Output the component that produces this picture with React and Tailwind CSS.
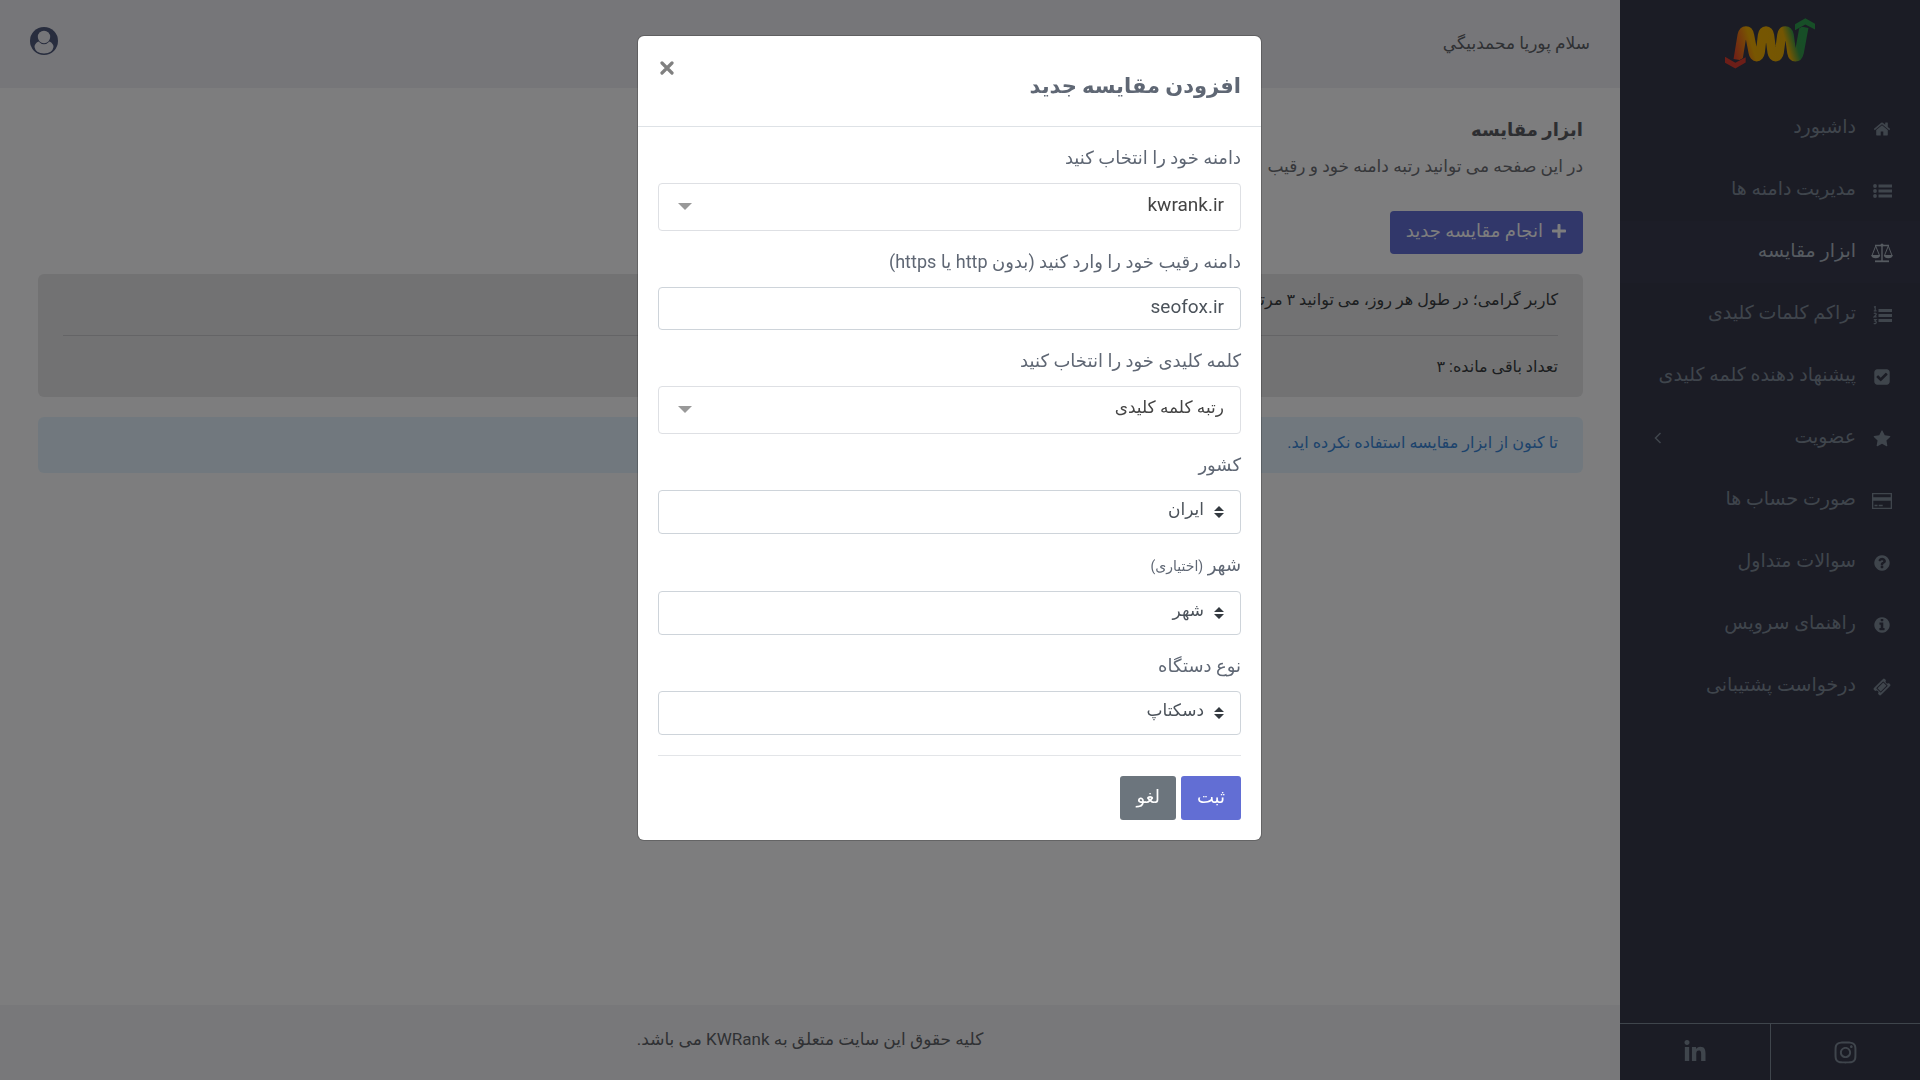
import { useId } from 'react';
import clsx from 'clsx';
import { FaInstagram, FaLinkedinIn, FaPlus } from 'react-icons/fa';

function Glyph({ d }) {
    return (
        <svg viewBox="0 0 1792 1792" fill="currentColor" className="h-[18px] w-[18px]" aria-hidden="true">
            <path d={d} />
        </svg>
    );
}

function ScaleIcon() {
    return (
        <svg viewBox="0 0 22 20" fill="none" stroke="currentColor" className="h-5 w-[22px]" aria-hidden="true">
            <path d="M4 2.500h14M11 2v16" strokeWidth="1.400" />
            <path d="M4 18.300h14" strokeWidth="1.800" />
            <circle cx="11" cy="2" r="1.500" fill="currentColor" stroke="none" />
            <path d="M4.700 3 1 12.500M4.700 3l3.800 9.500M17.300 3l-3.800 9.500M17.300 3 21 12.500" strokeWidth="1" />
            <path d="M.2 12h9q-.5 3.200-4.500 3.200T.2 12zM12.800 12h9q-.5 3.200-4.500 3.200T12.800 12z" fill="currentColor" stroke="none" />
        </svg>
    );
}

function CardIcon() {
    return (
        <svg viewBox="0 0 20 16" fill="currentColor" className="h-4 w-5" aria-hidden="true">
            <path d="M0 0h20v16H0zM1.300 1.300v3h17.400v-3zM1.300 7.700v7h17.400v-7z" fillRule="evenodd" />
            <path d="M2.500 11.800h3v1.400h-3zM6.700 11.800h4v1.400h-4z" />
        </svg>
    );
}

function BulletsIcon() {
    return (
        <svg viewBox="0 0 19 16" fill="currentColor" className="h-4 w-[19px]" aria-hidden="true">
            <circle cx="2" cy="3" r="1.900" />
            <circle cx="2" cy="8" r="1.900" />
            <circle cx="2" cy="13" r="1.900" />
            <path d="M5.500 1.500H19v3H5.500zM5.500 6.500H19v3H5.500zM5.500 11.500H19v3H5.500z" />
        </svg>
    );
}

function NumbersIcon() {
    return (
        <svg viewBox="0 0 19 19" fill="currentColor" className="h-[19px] w-[19px]" aria-hidden="true">
            <path d="M5.500 3H19v3H5.500zM5.500 8H19v3H5.500zM5.500 13H19v3H5.500z" />
            <path
                d="M1 1.200 2.200.5v4.300M.8 4.800h2.800M.8 7.600q1.300-1 2.200 0t-2 3.300h2.600M.8 13.500h2.400L1.800 15q1.800.2 1.400 1.700t-2.500.8"
                fill="none"
                stroke="currentColor"
                strokeWidth="1.200"
            />
        </svg>
    );
}

const paths = {
    home: 'M1472 992v480q0 26-19 45t-45 19h-384v-384h-256v384h-384q-26 0-45-19t-19-45v-480q0-1 .5-3t.5-3l575-474 575 474q1 2 1 6zm223-69l-62 74q-8 9-21 11h-3q-13 0-21-7l-692-577-692 577q-12 8-24 7-13-2-21-11l-62-74q-8-10-7-23.500t11-21.500l719-599q32-26 76-26t76 26l244 204v-195q0-14 9-23t23-9h192q14 0 23 9t9 23v408l219 182q10 8 11 21.500t-7 23.500z',
    check: 'M813 1299l614-614q19-19 19-45t-19-45l-102-102q-19-19-45-19t-45 19l-467 467-211-211q-19-19-45-19t-45 19l-102 102q-19 19-19 45t19 45l358 358q19 19 45 19t45-19zm851-883v960q0 119-84.500 203.500t-203.500 84.500h-960q-119 0-203.500-84.500t-84.500-203.500v-960q0-119 84.500-203.500t203.500-84.500h960q119 0 203.500 84.500t84.500 203.500z',
    star: 'M1728 647q0 22-26 48l-363 354 86 500q1 7 1 20 0 21-10.500 35.500t-30.500 14.500q-19 0-40-12l-449-236-449 236q-22 12-40 12-21 0-31.500-14.500t-10.500-35.500q0-6 2-20l86-500-364-354q-25-27-25-48 0-37 56-46l502-73 225-455q19-41 49-41t49 41l225 455 502 73q56 9 56 46z',
    question: 'M1024 1376v-192q0-14-9-23t-23-9h-192q-14 0-23 9t-9 23v192q0 14 9 23t23 9h192q14 0 23-9t9-23zm256-672q0-88-55.500-163t-138.500-116-170-41q-243 0-371 213-15 24 8 42l132 100q7 6 19 6 16 0 25-12 53-68 86-92 34-24 86-24 48 0 85.500 26t37.500 59q0 38-20 61t-68 45q-63 28-115.500 86.500t-52.500 125.500v36q0 14 9 23t23 9h192q14 0 23-9t9-23q0-19 21.500-49.500t54.500-49.500q32-18 49-28.500t46-35 44.500-48 28-60.500 12.500-81zm384 192q0 209-103 385.500t-279.500 279.500-385.500 103-385.500-103-279.500-279.500-103-385.500 103-385.500 279.500-279.500 385.500-103 385.500 103 279.500 279.500 103 385.500z',
    info: 'M1152 1376v-160q0-14-9-23t-23-9h-96v-512q0-14-9-23t-23-9h-320q-14 0-23 9t-9 23v160q0 14 9 23t23 9h96v320h-96q-14 0-23 9t-9 23v160q0 14 9 23t23 9h448q14 0 23-9t9-23zm-128-896v-160q0-14-9-23t-23-9h-192q-14 0-23 9t-9 23v160q0 14 9 23t23 9h192q14 0 23-9t9-23zm640 416q0 209-103 385.500t-279.500 279.500-385.500 103-385.500-103-279.500-279.500-103-385.500 103-385.500 279.500-279.500 385.500-103 385.500 103 279.500 279.500 103 385.500z',
    ticket: 'M1024 452l316 316-572 572-316-316zm-211 979l618-618q19-19 19-45t-19-45l-362-362q-18-18-45-18t-45 18l-618 618q-19 19-19 45t19 45l362 362q18 18 45 18t45-18zm889-637l-907 908q-37 37-90.500 37t-90.500-37l-126-126q56-56 56-136t-56-136-136-56-136 56l-125-126q-37-37-37-90.500t37-90.500l907-906q37-37 90.500-37t90.500 37l125 125q-56 56-56 136t56 136 136 56 136-56l126 125q37 37 37 90.500t-37 90.500z',
};

const menu = [
    { label: 'داشبورد', icon: <Glyph d={paths.home} /> },
    { label: 'مدیریت دامنه ها', icon: <BulletsIcon /> },
    { label: 'ابزار مقایسه', icon: <ScaleIcon />, active: true },
    { label: 'تراکم کلمات کلیدی', icon: <NumbersIcon /> },
    { label: 'پیشنهاد دهنده کلمه کلیدی', icon: <Glyph d={paths.check} /> },
    { label: 'عضویت', icon: <Glyph d={paths.star} />, children: true },
    { label: 'صورت حساب ها', icon: <CardIcon /> },
    { label: 'سوالات متداول', icon: <Glyph d={paths.question} /> },
    { label: 'راهنمای سرویس', icon: <Glyph d={paths.info} /> },
    { label: 'درخواست پشتیبانی', icon: <Glyph d={paths.ticket} /> },
];

function Logo() {
    return (
        <svg viewBox="315 53 270 152" className="h-[51px] w-[90px]" role="img" aria-label="KWRank">
            <defs>
                <linearGradient id="logo-wave" gradientUnits="userSpaceOnUse" x1="345" y1="170" x2="545" y2="110">
                    <stop offset="0" stopColor="#e0442c" />
                    <stop offset=".18" stopColor="#ec8014" />
                    <stop offset=".28" stopColor="#f0ac04" />
                    <stop offset=".76" stopColor="#e8ac06" />
                    <stop offset=".9" stopColor="#36984a" />
                    <stop offset="1" stopColor="#2f9c4f" />
                </linearGradient>
            </defs>
            <path
                d="M354 178 366 104C370 86 386 86 389 104L399 156C402 174 418 174 421 156L427 104C430 86 446 86 449 104L456 156C459 174 475 174 478 156L485 104C488 86 504 86 508 104L515 156C518 174 534 174 538 156L552 80"
                fill="none"
                stroke="url(#logo-wave)"
                strokeWidth="27"
            />
            <path d="M525 71 556 53 585 70V87L556 72 525 89z" fill="#2f9c4f" stroke="#36384a" strokeWidth="3" paintOrder="stroke" />
            <path d="M315 169 346 187 377 170V186L346 204 315 187z" fill="#d83c30" stroke="#36384a" strokeWidth="3" paintOrder="stroke" />
        </svg>
    );
}

function Sidebar() {
    return (
        <aside className="flex w-[300px] shrink-0 flex-col bg-[#36384a] text-[#7f8a99]">
            <div className="flex h-[97px] justify-center pt-[18px]">
                <Logo />
            </div>
            <nav>
                {menu.map((item) => (
                    <a
                        key={item.label}
                        href="#"
                        className={clsx('flex h-[62px] items-center px-[26px] text-[19px]', item.active && 'bg-[#393b4e] text-[#aab4c0]')}
                    >
                        <span className="flex w-6 justify-center pt-[2px]">{item.icon}</span>
                        <span className="mr-[14px] flex-1 whitespace-nowrap pb-[2px]">{item.label}</span>
                        {item.children && (
                            <svg viewBox="0 0 8 12" className="ml-2 h-3 w-2" fill="none" stroke="currentColor" strokeWidth="1.500" aria-hidden="true">
                                <path d="M6.500 1 1.500 6l5 5" />
                            </svg>
                        )}
                    </a>
                ))}
            </nav>
            <div className="mt-auto grid grid-cols-2 border-t border-[#7f8a99]">
                <a href="#" aria-label="Instagram" className="flex h-14 items-center justify-center border-l border-[#7f8a99]">
                    <FaInstagram size={25} />
                </a>
                <a href="#" aria-label="LinkedIn" className="flex h-14 items-center justify-center">
                    <FaLinkedinIn size={24} />
                </a>
            </div>
        </aside>
    );
}

function Header() {
    return (
        <header className="flex h-[88px] items-center justify-between bg-[#ededf3] px-[30px]">
            <span className="text-[17px] text-[#5f6369]">سلام پوریا محمدبیگي</span>
            <button type="button" aria-label="حساب کاربری" className="mb-[6px]">
                <svg viewBox="0 0 28 28" className="h-7 w-7">
                    <circle cx="14" cy="14" r="14" fill="#505a7c" />
                    <path d="M8.500 14.500Q11 17.200 14 17.200t5.500-2.700Q23.500 16.500 23.500 20q-1 6-9.500 6.500Q5.500 26 4.500 20q0-3.500 4-5.500z" fill="#ededf3" />
                    <circle cx="14" cy="10" r="6.200" fill="#ededf3" />
                </svg>
            </button>
        </header>
    );
}

function Field({ label, hint, children }) {
    const id = useId();
    return (
        <div className="mb-5">
            <label htmlFor={id} className="mb-[14px] block text-[18px] leading-[22px] text-[#5f6774]">
                {label} {hint && <small className="text-[14px]">{hint}</small>}
            </label>
            {children(id)}
        </div>
    );
}

function SearchSelect({ id, value, className }) {
    return (
        <div className="relative">
            <select id={id} className={clsx('h-12 w-full appearance-none rounded border border-[#dee0e4] bg-white px-4 pb-1 text-[#444]', className)}>
                <option>{value}</option>
            </select>
            <svg viewBox="0 0 14 7" className="pointer-events-none absolute top-5 left-5 h-[7px] w-[14px] fill-[#999]" aria-hidden="true">
                <path d="M0 0h14L7 7z" />
            </svg>
        </div>
    );
}

function Select({ id, value }) {
    return (
        <div className="relative">
            <select id={id} className="h-11 w-full appearance-none rounded border border-[#ced4da] bg-white pr-9 pb-1 pl-4 text-[17px] text-[#4b525a]">
                <option>{value}</option>
            </select>
            <svg viewBox="0 0 10 12" className="pointer-events-none absolute top-4 right-[17px] h-3 w-[10px] fill-[#343a40]" aria-hidden="true">
                <path d="M0 5h10L5 0zM0 7h10l-5 5z" />
            </svg>
        </div>
    );
}

function CompareModal() {
    return (
        <div className="fixed inset-0 overflow-y-auto bg-black/50 pt-9 pr-[21px]">
            <div role="dialog" aria-modal="true" aria-labelledby="modal-title" className="mx-auto max-w-[623px] rounded-md bg-white shadow-[0_0_0_1px_rgba(0,0,0,0.2)]">
                <div className="flex items-start justify-between border-b border-[#dee2e6] px-5 pt-[25px] pb-5">
                    <h4 id="modal-title" className="pt-[5px] text-[21px] leading-10 font-bold text-[#5f6774]">افزودن مقایسه جدید</h4>
                    <button type="button" aria-label="بستن" className="ml-[2px] text-[#808080]">
                        <svg viewBox="0 0 14 14" className="h-[14px] w-[14px]" fill="none" stroke="currentColor" strokeWidth="3.200" strokeLinecap="round">
                            <path d="M2 2l10 10M12 2 2 12" />
                        </svg>
                    </button>
                </div>
                <form className="p-5" onSubmit={(e) => e.preventDefault()}>
                    <Field label="دامنه خود را انتخاب کنید">{(id) => <SearchSelect id={id} value="kwrank.ir" className="text-[19px]" />}</Field>
                    <Field label="دامنه رقیب خود را وارد کنید (بدون http یا https)">
                        {(id) => (
                            <input
                                id={id}
                                type="text"
                                defaultValue="seofox.ir"
                                className="block h-[43px] w-full rounded border border-[#ced4da] px-4 pb-1 text-[19px] text-[#4b525a]"
                            />
                        )}
                    </Field>
                    <Field label="کلمه کلیدی خود را انتخاب کنید">{(id) => <SearchSelect id={id} value="رتبه کلمه کلیدی" className="text-[17px]" />}</Field>
                    <Field label="کشور">{(id) => <Select id={id} value="ایران" />}</Field>
                    <Field label="شهر" hint="(اختیاری)">{(id) => <Select id={id} value="شهر" />}</Field>
                    <Field label="نوع دستگاه">{(id) => <Select id={id} value="دسکتاپ" />}</Field>
                    <div className="flex gap-[5px] border-t border-[#e3e5e8] pt-5">
                        <button type="submit" className="h-11 rounded-[3px] bg-[#626ed4] px-4 pb-1 text-[18px] text-white">ثبت</button>
                        <button type="button" className="h-11 rounded-[3px] bg-[#6c757d] px-4 pb-1 text-[18px] text-white">لغو</button>
                    </div>
                </form>
            </div>
        </div>
    );
}

export default function App() {
    return (
        <div dir="rtl" className="flex min-h-screen bg-[#fafafc] font-['Roboto','DejaVu_Sans',sans-serif]">
            <Sidebar />
            <div className="flex min-w-0 flex-1 flex-col">
                <Header />
                <main className="flex-1 pr-[37px] pl-[38px] pt-6 text-[17px]">
                    <h1 className="text-[18px] leading-9 font-bold text-[#5a5c63]">ابزار مقایسه</h1>
                    <p className="leading-9 text-[#6c6e74]">در این صفحه می توانید رتبه دامنه خود و رقیب</p>
                    <button type="button" className="mt-[27px] flex h-[43px] items-center gap-2 rounded bg-[#626ed4] px-4 pb-1 text-[18px] text-[#fafafc]">
                        <FaPlus size={16} />
                        انجام مقایسه جدید
                    </button>
                    <section className="mt-5 rounded-md bg-[#e4e4e6] px-[25px] pt-3 pb-4 text-[16px] leading-7 text-[#383d41]">
                        <p>کاربر گرامی؛ در طول هر روز، می توانید ۳ مرتبه از ابزار مقایسه استفاده کنید.</p>
                        <hr className="mt-[21px] mb-[17px] border-[#c8c9cc]" />
                        <p>تعداد باقی مانده: ۳</p>
                    </section>
                    <p className="mt-5 rounded-md bg-[#e2f1fd] px-[25px] pt-3 pb-4 text-[16px] leading-7 text-[#3a86d8]">تا کنون از ابزار مقایسه استفاده نکرده اید.</p>
                </main>
                <footer className="flex h-[75px] items-center justify-center bg-[#f1f1f4] pb-[6px] text-[17px] text-[#5f6369]">
                    کلیه حقوق این سایت متعلق به KWRank می باشد.
                </footer>
            </div>
            <CompareModal />
        </div>
    );
}
